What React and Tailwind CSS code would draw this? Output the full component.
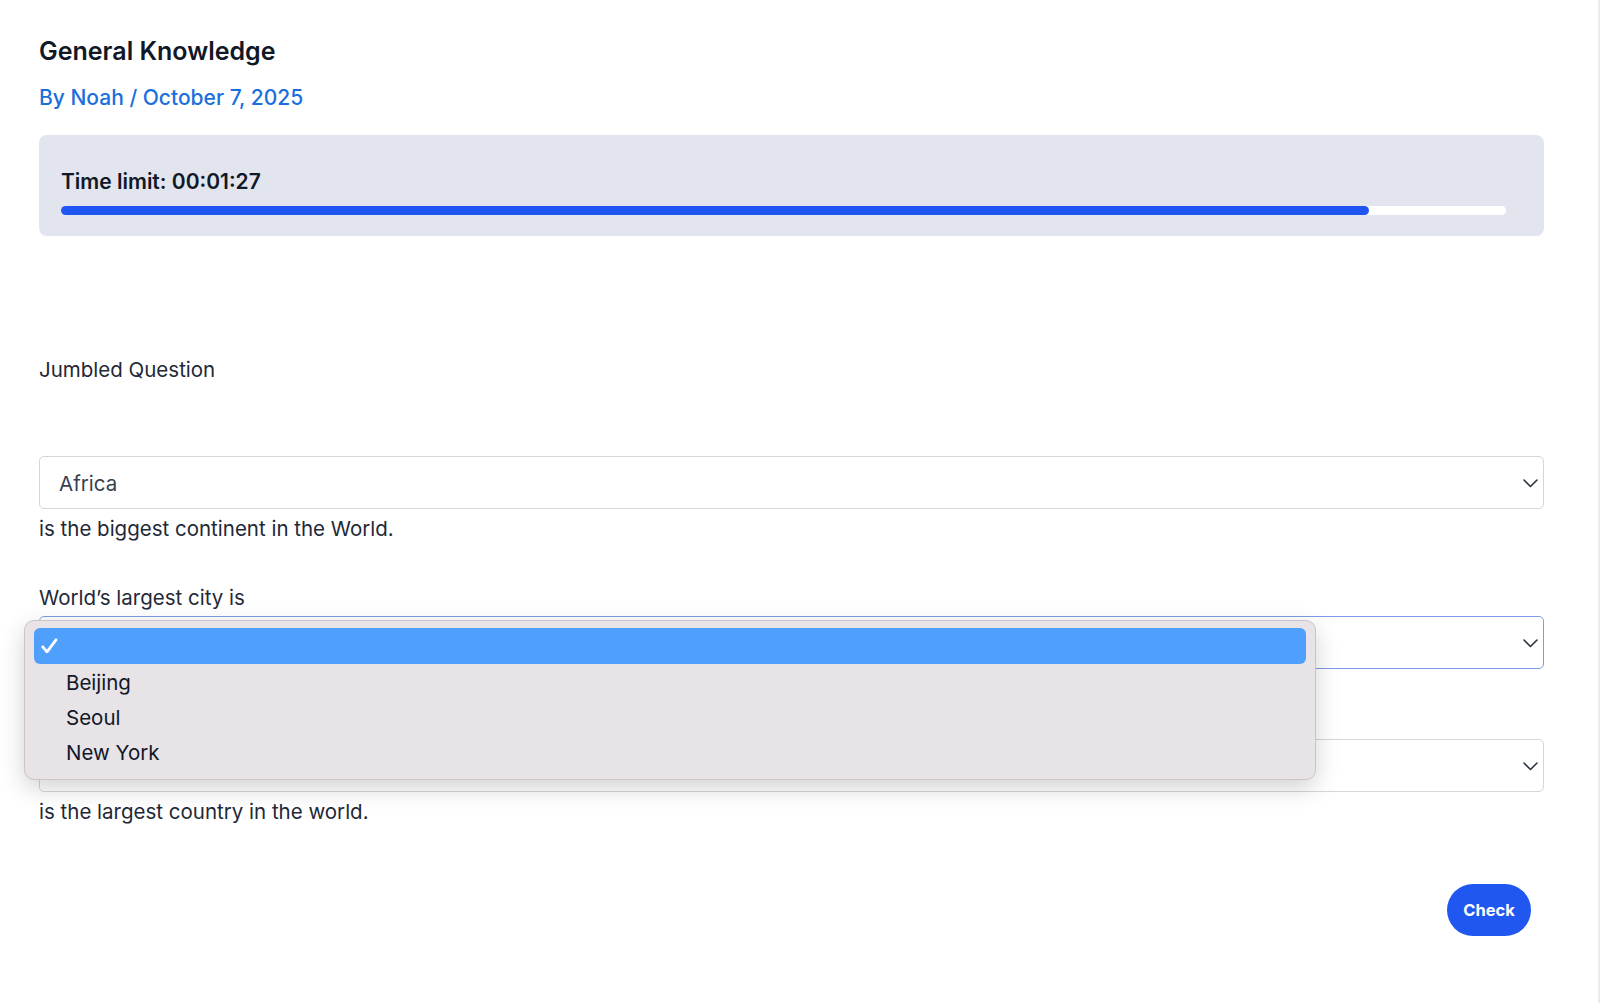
const font = { fontFamily: 'Inter, "Helvetica Neue", Arial, sans-serif' };

function Chevron() {
    return (
        <svg width="15" height="9" viewBox="0 0 15 9" fill="none" className="absolute right-[5px] top-[22px]">
            <path d="M1 1 L7.5 7.5 L14 1" stroke="#2b3340" strokeWidth="1.6" strokeLinecap="round" strokeLinejoin="round" />
        </svg>
    );
}

function Select({ value, focused }) {
    return (
        <div
            className={`relative h-[53px] w-full rounded-[5px] border bg-white flex items-center px-[19px] pt-[3px] ${focused ? 'border-[#7f9be3]' : 'border-[#d4d6da]'}`}
        >
            <span className="text-[20.5px] text-[#374151]">{value}</span>
            <Chevron />
        </div>
    );
}

function DropdownMenu() {
    const options = ['Beijing', 'Seoul', 'New York'];
    return (
        <div className="absolute left-[-15px] top-[4px] z-10 w-[1292px] h-[160px] rounded-[10px] border border-[#c9c6cb] bg-[#e7e3e7] px-[9px] pt-[7px] shadow-[0_8px_24px_rgba(0,0,0,0.18)]">
            <div className="h-[36px] rounded-[6px] bg-[#4f9ffd] flex items-center pl-[7px]">
                <svg width="17" height="16" viewBox="0 0 17 16" fill="none">
                    <path d="M1.8 8.8 L6 13.8 L15 1.8" stroke="white" strokeWidth="2.8" strokeLinecap="round" strokeLinejoin="round" />
                </svg>
            </div>
            <div className="mt-[2px]">
                {options.map((o) => (
                    <div key={o} className="h-[35px] flex items-center pl-[32px] text-[20.5px] text-[#111827]">
                        {o}
                    </div>
                ))}
            </div>
        </div>
    );
}

export default function App() {
    return (
        <div className="min-h-screen w-full bg-white flex" style={font}>
            <div className="flex-1 pl-[39px] pt-[35px] pb-[67px]">
                <div className="w-[1505px]">
                    <h1 className="text-[25px] leading-8 font-semibold text-[#111827]">General Knowledge</h1>
                    <p className="mt-[15px] text-[21px] leading-8 font-medium text-[#1b6fdc]">By Noah / October 7, 2025</p>

                    <div className="mt-[21px] h-[101px] rounded-lg bg-[#e2e5ed] pl-[22px] pr-[38px] pt-[33px]">
                        <p className="text-[21px] leading-7 font-semibold text-[#111827]">Time limit: 00:01:27</p>
                        <div className="mt-[10px] h-[9px] w-full rounded-full bg-white">
                            <div className="h-full w-[90.5%] rounded-full bg-[#1f55f2]" />
                        </div>
                    </div>

                    <p className="mt-[120px] text-[20.5px] leading-7 text-[#1f2937]">Jumbled Question</p>

                    <div className="mt-[72px]">
                        <Select value="Africa" />
                        <p className="mt-[6px] text-[20.5px] leading-7 text-[#1f2937]">is the biggest continent in the World.</p>
                    </div>

                    <div className="mt-[41px]">
                        <p className="text-[20.5px] leading-7 text-[#1f2937]">World’s largest city is</p>
                        <div className="relative mt-[4px]">
                            <Select value="" focused />
                            <DropdownMenu />
                        </div>
                    </div>

                    <div className="mt-[70px]">
                        <Select value="" />
                        <p className="mt-[6px] text-[20.5px] leading-7 text-[#1f2937]">is the largest country in the world.</p>
                    </div>

                    <div className="mt-[58px] flex justify-end pr-[13px]">
                        <button className="h-[52px] w-[84px] rounded-full bg-[#1f57f0] text-[16.5px] font-bold text-white">
                            Check
                        </button>
                    </div>
                </div>
            </div>
            <div className="w-[2px] shrink-0 bg-[#ececee]" />
        </div>
    );
}
